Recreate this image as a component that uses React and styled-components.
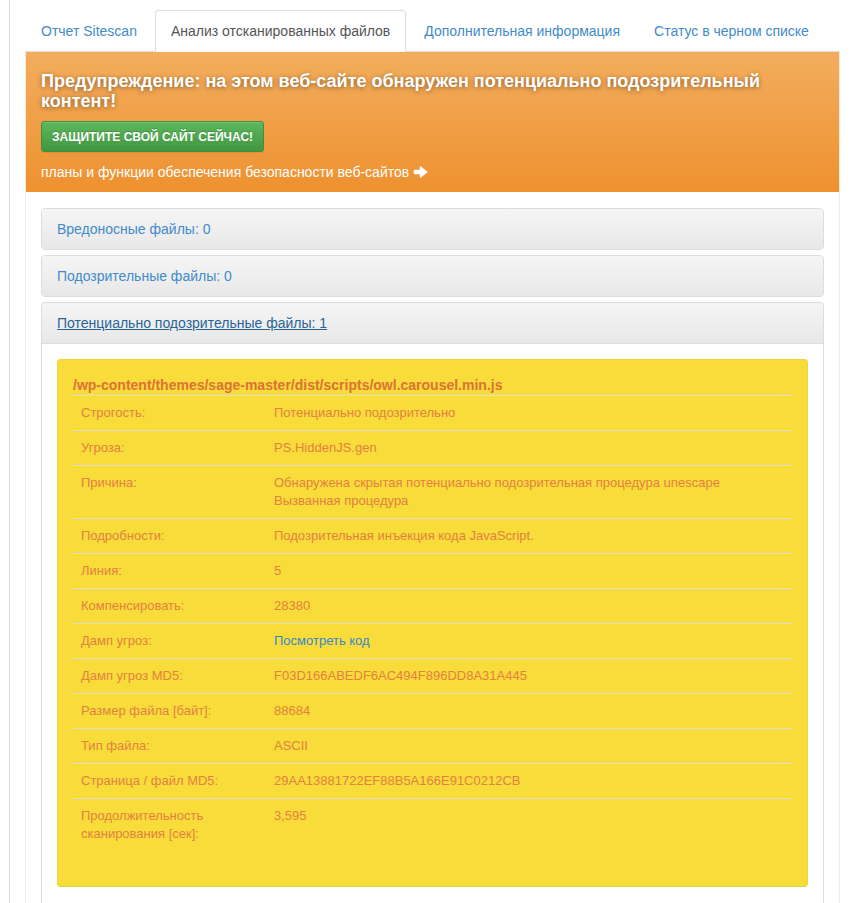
import { createGlobalStyle } from "styled-components";
import styled from "styled-components";

const Global = createGlobalStyle`
  body {
    margin: 0;
    background: #fff;
    font-family: "Liberation Sans", Arial, sans-serif;
    font-size: 14px;
    line-height: 20px;
    color: #333;
  }
`;

const Page = styled.div`
  margin-left: 9px;
  border-left: 1px solid #ddd;
  padding: 10px 13px 0 15px;
  min-height: 893px;
`;

const Tabs = styled.ul`
  display: flex;
  list-style: none;
  margin: 0;
  padding: 0;
  border-bottom: 1px solid #ddd;
`;

const Tab = styled.li`
  margin-right: 2px;
  margin-bottom: -1px;
  padding: 10px 15px;
  border: 1px solid ${(p) => (p.$active ? "#ddd" : "transparent")};
  border-bottom-color: ${(p) => (p.$active ? "#fff" : "transparent")};
  border-radius: 4px 4px 0 0;
  background: ${(p) => (p.$active ? "#fff" : "transparent")};
  color: ${(p) => (p.$active ? "#555" : "#428bca")};
  white-space: nowrap;
`;

const TabBody = styled.div`
  border-left: 1px solid #f6ead9;
  border-right: 1px solid #f6ead9;
`;

const Alert = styled.div`
  padding: 19px 15px 10px;
  background: linear-gradient(to bottom, #f3ad5e 0%, #ee912f 100%);
  color: #fff;
`;

const AlertTitle = styled.h3`
  margin: 0 0 10px;
  max-width: 740px;
  font-size: 18px;
  font-weight: bold;
  line-height: 20px;
  text-shadow: 0 1px 5px rgba(0, 0, 0, 0.45);
`;

const ProtectButton = styled.a`
  display: inline-flex;
  align-items: center;
  box-sizing: border-box;
  height: 31px;
  padding: 0 10px;
  border: 1px solid #3e8f3e;
  border-radius: 3px;
  background: linear-gradient(to bottom, #5cb85c 0%, #419641 100%);
  color: #fff;
  font-size: 12px;
  font-weight: bold;
  text-transform: uppercase;
  text-shadow: 0 -1px 0 rgba(0, 0, 0, 0.2);
  box-shadow: inset 0 1px 0 rgba(255, 255, 255, 0.15), 0 1px 1px rgba(0, 0, 0, 0.075);
`;

const PlansLink = styled.p`
  display: flex;
  align-items: center;
  gap: 4px;
  margin: 10px 0 0;
  font-size: 14px;
  line-height: 20px;
`;

const Content = styled.div`
  display: flex;
  flex-direction: column;
  gap: 5px;
  padding: 16px 15px 0;
  background: #fff;
`;

const Panel = styled.div`
  border: 1px solid #ddd;
  border-radius: 4px;
  border-bottom: ${(p) => (p.$open ? "none" : "1px solid #ddd")};
  border-bottom-left-radius: ${(p) => (p.$open ? "0" : "4px")};
  border-bottom-right-radius: ${(p) => (p.$open ? "0" : "4px")};
  background: #fff;
  overflow: hidden;
`;

const PanelHeading = styled.div`
  padding: 10px 15px;
  background: linear-gradient(to bottom, #f5f5f5 0%, #e8e8e8 100%);
  border-bottom: ${(p) => (p.$open ? "1px solid #ddd" : "none")};
  color: ${(p) => (p.$open ? "#2a6496" : "#428bca")};
  text-decoration: ${(p) => (p.$open ? "underline" : "none")};
  font-size: 14px;
  line-height: 20px;
`;

const PanelBody = styled.div`
  padding: 15px 15px 20px;
`;

const Finding = styled.div`
  padding: 15px 15px 15px;
  border: 1px solid #efd53b;
  border-bottom-color: #d3d93d;
  border-radius: 4px;
  background: #f8dc3a;
`;

const FilePath = styled.div`
  color: #dd7136;
  font-size: 14px;
  font-weight: bold;
  line-height: 20px;
`;

const Table = styled.table`
  width: 100%;
  margin-bottom: 20px;
  border-collapse: collapse;
  font-size: 13px;
  line-height: 18px;
  color: #e58040;
`;

const Cell = styled.td`
  padding: 8px;
  border-top: 1px solid #dfdfcf;
  vertical-align: top;
  width: ${(p) => p.$w || "auto"};
`;

const Link = styled.a`
  color: #3a87c8;
`;

const ArrowIcon = () => (
  <svg width="15" height="12" viewBox="0 0 15 12" fill="#fff" stroke="#fff" strokeLinejoin="round">
    <rect x="1" y="4" width="7" height="4" rx="0.8" strokeWidth="0.6" />
    <polygon points="7.5,1 13.8,6 7.5,11" strokeWidth="1.4" />
  </svg>
);

const rows = [
  ["Строгость:", "Потенциально подозрительно"],
  ["Угроза:", "PS.HiddenJS.gen"],
  [
    "Причина:",
    <>
      Обнаружена скрытая потенциально подозрительная процедура unescape
      <br />
      Вызванная процедура
    </>,
  ],
  ["Подробности:", "Подозрительная инъекция кода JavaScript."],
  ["Линия:", "5"],
  ["Компенсировать:", "28380"],
  ["Дамп угроз:", <Link>Посмотреть код</Link>],
  ["Дамп угроз MD5:", "F03D166ABEDF6AC494F896DD8A31A445"],
  ["Размер файла [байт]:", "88684"],
  ["Тип файла:", "ASCII"],
  ["Страница / файл MD5:", "29AA13881722EF88B5A166E91C0212CB"],
  [
    <>
      Продолжительность
      <br />
      сканирования [сек]:
    </>,
    "3,595",
  ],
];

export default function App() {
  return (
    <>
      <Global />
      <Page>
        <Tabs>
          <Tab>Отчет Sitescan</Tab>
          <Tab $active>Анализ отсканированных файлов</Tab>
          <Tab>Дополнительная информация</Tab>
          <Tab>Статус в черном списке</Tab>
        </Tabs>
        <TabBody>
          <Alert>
            <AlertTitle>
              Предупреждение: на этом веб-сайте обнаружен потенциально
              подозрительный контент!
            </AlertTitle>
            <ProtectButton>Защитите свой сайт сейчас!</ProtectButton>
            <PlansLink>
              планы и функции обеспечения безопасности веб-сайтов
              <ArrowIcon />
            </PlansLink>
          </Alert>
          <Content>
            <Panel>
              <PanelHeading>Вредоносные файлы: 0</PanelHeading>
            </Panel>
            <Panel>
              <PanelHeading>Подозрительные файлы: 0</PanelHeading>
            </Panel>
            <Panel $open>
              <PanelHeading $open>Потенциально подозрительные файлы: 1</PanelHeading>
              <PanelBody>
                <Finding>
                  <FilePath>/wp-content/themes/sage-master/dist/scripts/owl.carousel.min.js</FilePath>
                  <Table>
                    <tbody>
                      {rows.map(([label, value], i) => (
                        <tr key={i}>
                          <Cell $w="177px">{label}</Cell>
                          <Cell>{value}</Cell>
                        </tr>
                      ))}
                    </tbody>
                  </Table>
                </Finding>
              </PanelBody>
            </Panel>
          </Content>
        </TabBody>
      </Page>
    </>
  );
}
